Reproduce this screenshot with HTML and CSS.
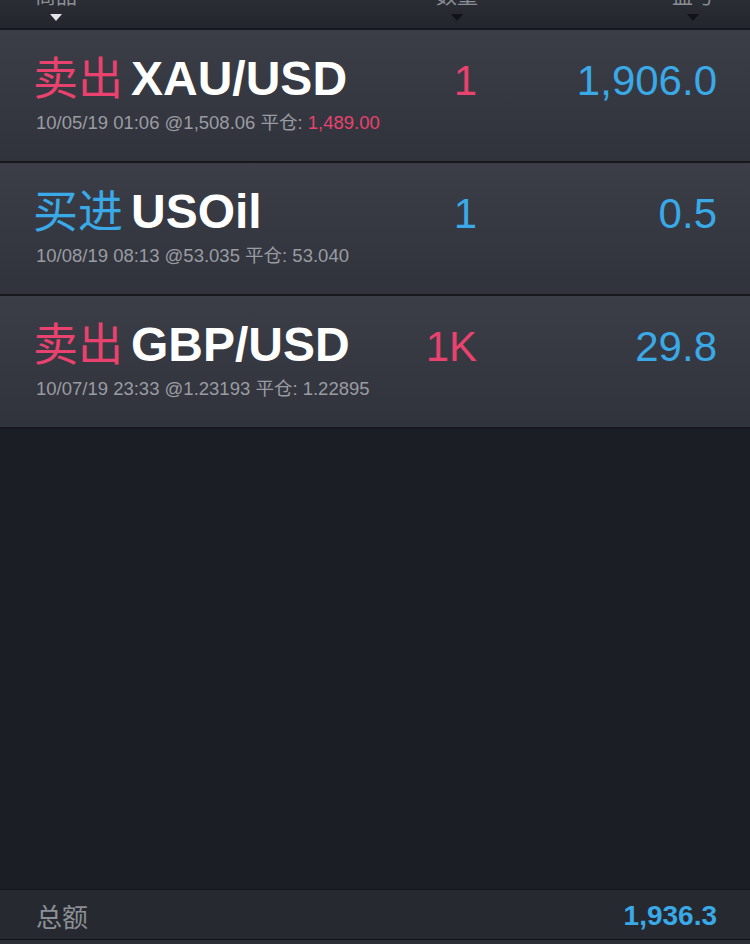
FILE: index.html
```html
<!DOCTYPE html>
<html lang="zh-CN">
<head>
    <meta charset="UTF-8">
    <meta name="viewport" content="width=device-width, initial-scale=1.0">
    <title>持仓</title>
    <link rel="stylesheet" href="styles.css">
</head>
<body>
    <div class="header">
        <div class="col-title first">
            <span class="title">商品</span>
            <span class="arrow light"></span>
        </div>
        <div class="col-title">
            <span class="title">数量</span>
            <span class="arrow"></span>
        </div>
        <div class="col-title">
            <span class="title">盈亏</span>
            <span class="arrow"></span>
        </div>
    </div>

    <div class="positions">
        <div class="position">
            <div class="name"><span class="side sell">卖出</span><span class="symbol">XAU/USD</span></div>
            <div class="qty sell">1</div>
            <div class="pl">1,906.0</div>
            <div class="meta">10/05/19 01:06 @1,508.06 平仓: <span class="sell">1,489.00</span></div>
        </div>
        <div class="position">
            <div class="name"><span class="side buy">买进</span><span class="symbol">USOil</span></div>
            <div class="qty buy">1</div>
            <div class="pl">0.5</div>
            <div class="meta">10/08/19 08:13 @53.035 平仓: 53.040</div>
        </div>
        <div class="position">
            <div class="name"><span class="side sell">卖出</span><span class="symbol">GBP/USD</span></div>
            <div class="qty sell">1K</div>
            <div class="pl">29.8</div>
            <div class="meta">10/07/19 23:33 @1.23193 平仓: 1.22895</div>
        </div>
    </div>

    <div class="empty"></div>

    <div class="total">
        <span class="total-label">总额</span>
        <span class="total-value">1,936.3</span>
    </div>
    <div class="bottom-strip"></div>
</body>
</html>
```

FILE: styles.css
```css
body {
    margin: 0;
    height: 944px;
    overflow: hidden;
    display: flex;
    flex-direction: column;
    background-color: #1b1e25;
    font-family: "Liberation Sans", Arial, "Noto Sans CJK SC", sans-serif;
    color: #fff;
}

.header {
    height: 28px;
    flex: none;
    display: grid;
    grid-template-columns: 1fr 100px 236px;
    padding: 0 36px 0 35px;
    overflow: hidden;
    background: linear-gradient(#2a2d34, #23262c);
    border-bottom: 2px solid #16181d;
}

.col-title {
    justify-self: end;
    display: flex;
    flex-direction: column;
    align-items: center;
}

.col-title.first {
    justify-self: start;
}

.title {
    margin-top: -16px;
    font-size: 21px;
    line-height: 24px;
    color: #8b8e95;
}

.arrow {
    width: 0;
    height: 0;
    margin-top: 6px;
    border-left: 6px solid transparent;
    border-right: 6px solid transparent;
    border-top: 7px solid #111317;
}

.arrow.light {
    border-top-color: #e4e5e8;
}

.position {
    display: grid;
    grid-template-columns: 1fr 100px 240px;
    align-items: baseline;
    align-content: start;
    height: 133px;
    box-sizing: border-box;
    padding: 22px 33px 0 33px;
    background: linear-gradient(#3b3e47, #30333b);
    border-bottom: 2px solid #16181d;
}

.name {
    line-height: 48px;
    white-space: nowrap;
}

.side {
    font-family: "Noto Sans CJK SC", sans-serif;
    font-size: 45px;
    line-height: 48px;
    margin-right: 8px;
}

.symbol {
    font-size: 48px;
    font-weight: bold;
    line-height: 48px;
}

.sell {
    color: #ea426e;
}

.buy {
    color: #3aa9e7;
}

.qty,
.pl {
    font-size: 42px;
    line-height: 48px;
    text-align: right;
}

.pl {
    color: #3aa9e7;
}

.meta {
    grid-column: 1 / -1;
    margin-top: -2px;
    padding-left: 3px;
    font-size: 18.5px;
    line-height: 22px;
    color: #9a9ca3;
    white-space: nowrap;
}

.empty {
    flex: 1;
}

.total {
    height: 50px;
    flex: none;
    display: flex;
    justify-content: space-between;
    align-items: center;
    padding: 2px 33px 0 36px;
    box-sizing: border-box;
    background-color: #262a30;
    border-top: 1px solid #14161b;
}

.total-label {
    font-family: "Noto Sans CJK SC", sans-serif;
    font-size: 26px;
    color: #8c8f96;
}

.total-value {
    font-size: 28px;
    font-weight: bold;
    color: #3aa9e7;
}

.bottom-strip {
    height: 4px;
    flex: none;
    background-color: #2b2e34;
    border-top: 1px solid #101216;
}
```
